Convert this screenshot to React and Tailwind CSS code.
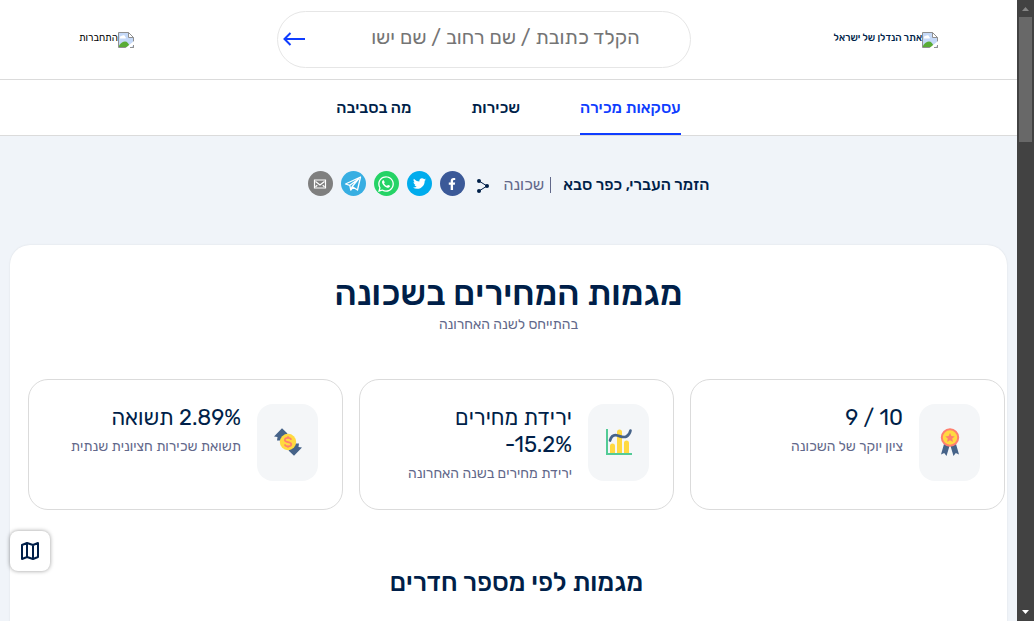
import React from "react";
import { FaFacebookF, FaTwitter, FaWhatsapp } from "react-icons/fa";

function MissingImage() {
  return (
    <svg width="16" height="16" viewBox="0 0 16 16" className="mt-[2px] shrink-0" aria-hidden="true">
      <path d="M.5.5h10l5 5v10H.5z" fill="#c5d9f8" stroke="#909090" />
      <path d="M2 5.500a1.600 1.600 0 0 1 1.800-1.600 2 2 0 0 1 3.500 1 .9.9 0 0 1 .2 1.600H2z" fill="#fff" />
      <path d="M1 15v-1.500c2-2.500 4-4 6-4s4 2 5 5.500z" fill="#5aac36" />
      <path d="M10.500.5v5h5z" fill="#fff" stroke="#909090" />
      <path d="M7.500 16l8.500-7v3.500L12.500 16z" fill="#fff" />
      <path d="M12 15.500h3.500V13" fill="none" stroke="#909090" />
    </svg>
  );
}

function Medal() {
  return (
    <svg width="28" height="28" viewBox="0 0 28 28" aria-hidden="true">
      <path d="M8 16 5 26.500l3.200-1.500L10.500 28 13.500 18zM20 16 23 26.500l-3.200-1.500L17.500 28 14.500 18z" fill="#466389" />
      <circle cx="14" cy="9.500" r="8.200" fill="#ffd940" stroke="#ff7f6e" strokeWidth="2" />
      <path d="m14 5 1.400 3 3.300.4-2.500 2.200.7 3.300-2.900-1.700-2.900 1.700.7-3.300-2.500-2.200 3.300-.4z" fill="#ff7f6e" />
    </svg>
  );
}

function Chart() {
  return (
    <svg width="28" height="28" viewBox="0 0 28 28" aria-hidden="true">
      <path d="M5 26v-8a2.500 2.500 0 0 1 5 0v8zM12 26V4a2.500 2.500 0 0 1 5 0v22zM19 26V15a2.500 2.500 0 0 1 5 0v11z" fill="#ffd940" />
      <path d="M2 1v25h25" fill="none" stroke="#52cb96" strokeWidth="2" />
      <path d="M5 12.500C6.500 7.500 9 6.500 12.500 7.500s6.500 2.500 9 1S25 5 25.500 2.500" fill="none" stroke="#466389" strokeWidth="2.700" strokeLinecap="round" />
    </svg>
  );
}

function Yield() {
  return (
    <svg width="28" height="28" viewBox="0 0 28 28" aria-hidden="true">
      <path d="M0 8.500 8 .2l5.500 5.300-7 7H3L3.500 9zM28 19.500l-8 8.300-5.500-5.300 7-7H25l-.5 3.500z" fill="#466389" />
      <circle cx="14" cy="14" r="8.200" fill="#ffd940" />
      <path d="M17.200 11.800c-.3-1.300-1.600-2-3.200-2-1.800 0-3.200.7-3.200 2.100 0 3 6.500 1.300 6.500 4.300 0 1.400-1.500 2.100-3.300 2.100-1.600 0-3-.7-3.200-2M14 8.300v1.500M14 18.300v1.500" fill="none" stroke="#ff7f6e" strokeWidth="1.700" />
    </svg>
  );
}

function ShareNodes() {
  return (
    <svg width="14" height="16" viewBox="0 0 14 16" aria-hidden="true">
      <path d="m3 3 8 5-8 5" fill="none" stroke="#001f49" />
      <circle cx="3" cy="3" r="2" fill="#001f49" />
      <circle cx="11" cy="8" r="2" fill="#001f49" />
      <circle cx="3" cy="13" r="2" fill="#001f49" />
    </svg>
  );
}

function PaperPlane() {
  return (
    <svg width="18" height="18" viewBox="0 0 18 18" fill="none" stroke="#fff" strokeWidth="1.300" strokeLinejoin="round" aria-hidden="true">
      <path d="M1.500 9 16.500 2l-3 13-4.300-2.800-2.400 2.800-1-4.700zM5.800 10.300 14.500 4 8.200 11.500l-1.400 3.300" />
    </svg>
  );
}

function Envelope() {
  return (
    <svg width="14" height="12" viewBox="0 0 14 12" fill="none" stroke="#fff" strokeWidth="1.200" aria-hidden="true">
      <path d="M1.500 2h11v8h-11zM2.500 3.500 7 7l4.500-3.500M2.500 8.800l1.800-1.600M11.500 8.800 9.700 7.200" />
    </svg>
  );
}

const shareLinks = [
  { label: "Facebook", color: "bg-[#3b5998]", icon: <FaFacebookF size={12} /> },
  { label: "Twitter", color: "bg-[#00aced]", icon: <FaTwitter size={13} /> },
  { label: "WhatsApp", color: "bg-[#25d366]", icon: <FaWhatsapp size={18} /> },
  { label: "Telegram", color: "bg-[#37aee2]", icon: <PaperPlane /> },
  { label: "Email", color: "bg-[#7f7f7f]", icon: <Envelope /> },
];

const tabs = ["עסקאות מכירה", "שכירות", "מה בסביבה"];

const stats = [
  { icon: <Medal />, title: <span dir="ltr">9 / 10</span>, text: "ציון יוקר של השכונה" },
  {
    icon: <Chart />,
    title: (
      <>
        ירידת מחירים <br />
        <span dir="ltr">-15.2%</span>
      </>
    ),
    text: "ירידת מחירים בשנה האחרונה",
  },
  {
    icon: <Yield />,
    title: (
      <>
        <span dir="ltr">2.89%</span> תשואה
      </>
    ),
    text: "תשואת שכירות חציונית שנתית",
  },
];

export default function App() {
  return (
    <div className="flex h-screen overflow-hidden bg-[#f0f4f9] font-['Rubik','Open_Sans',sans-serif] text-[#001f49]">
      <div dir="rtl" className="relative min-w-0 flex-1 overflow-hidden">
        <header className="flex h-20 items-center justify-between border-b border-[#dbdbdb] bg-white px-[79px]">
          <a href="#home" className="flex items-start pb-[2px] text-[10px] leading-4 font-medium">
            <MissingImage />
            אתר הנדלן של ישראל
          </a>
          <form className="flex h-[57px] w-[414px] items-center rounded-full border border-[#e6e6e6] pr-[50px] pb-[2px] pl-[5px]">
            <input
              type="text"
              aria-label="חיפוש"
              placeholder="הקלד כתובת / שם רחוב / שם ישו"
              className="min-w-0 flex-1 pb-1 text-xl outline-none placeholder:text-[#757575]"
            />
            <button type="button" aria-label="חפש">
              <svg width="22" height="16" viewBox="0 0 22 16" fill="none" stroke="#0f3dff" strokeWidth="2" aria-hidden="true">
                <path d="M22 8H1.500M7.500 2 1.500 8l6 6" />
              </svg>
            </button>
          </form>
          <a href="#login" className="flex items-start pb-[2px] text-[10px] leading-4 text-black">
            <MissingImage />
            התחברות
          </a>
        </header>

        <nav className="flex h-14 justify-center gap-[60px] border-b border-[#dbdbdb] bg-white text-base font-medium">
          {tabs.map((tab, i) => (
            <a
              key={tab}
              href="#tab"
              className={i === 0 ? "flex items-center border-b-2 border-[#0f3dff] pt-[2px] text-[#0f3dff]" : "flex items-center border-b-2 border-transparent pt-[2px]"}
            >
              {tab}
            </a>
          ))}
        </nav>

        <div className="flex h-[109px] items-start justify-center pt-[35px]">
          <div className="flex items-center">
            <strong className="text-base font-medium">הזמר העברי, כפר סבא</strong>
            <span className="mr-3 h-4 w-px bg-[#62688a]" />
            <span className="mr-[6px] text-base text-[#62688a]">שכונה</span>
            <span className="mr-[14px] pt-[2px]">
              <ShareNodes />
            </span>
            <div className="mr-[11px] flex gap-2 pb-[2px]">
              {shareLinks.map((s) => (
                <button
                  key={s.label}
                  type="button"
                  aria-label={s.label}
                  className={`flex size-[25px] items-center justify-center rounded-full text-white ${s.color}`}
                >
                  {s.icon}
                </button>
              ))}
            </div>
          </div>
        </div>

        <main className="mx-[10px] min-h-screen rounded-[20px] bg-white pt-7 shadow-[0_0_2px_rgba(0,0,0,0.1)]">
          <h1 className="text-center text-[35px] leading-10 font-medium">מגמות המחירים בשכונה</h1>
          <p className="text-center text-sm leading-6 text-[#62688a]">בהתייחס לשנה האחרונה</p>

          <section className="mt-[42px] mr-[2px] ml-[18px]">
            <div className="grid grid-cols-3 gap-4">
              {stats.map((s) => (
                <article key={s.text} className="flex min-h-[131px] items-start gap-4 rounded-[20px] border border-[#dbdbdb] px-6 pt-6 pb-5">
                  <div className="flex h-[77px] w-[61px] shrink-0 items-center justify-center rounded-2xl bg-[#f4f6f8] pb-[2px]">{s.icon}</div>
                  <div>
                    <h3 className="text-[22px] leading-[27px]">{s.title}</h3>
                    <p className="mt-1 text-sm leading-6 whitespace-nowrap text-[#62688a]">{s.text}</p>
                  </div>
                </article>
              ))}
            </div>
            <h2 className="mt-[57px] text-center text-[26px] leading-8 font-medium">מגמות לפי מספר חדרים</h2>
          </section>
        </main>

        <button
          type="button"
          aria-label="מפה"
          className="absolute bottom-[50px] left-[10px] flex size-10 items-center justify-center rounded-lg bg-white shadow-[0_0_4px_rgba(0,0,0,0.4)]"
        >
          <svg width="20" height="20" viewBox="0 0 20 20" fill="none" stroke="#001f49" strokeWidth="2" strokeLinejoin="round" aria-hidden="true">
            <path d="M2 4l5-2 6 2 5-2v14l-5 2-6-2-5 2zM7 2v14M13 4v14" />
          </svg>
        </button>
      </div>

      <div className="flex w-[17px] shrink-0 flex-col items-center justify-between bg-[#424242]" aria-hidden="true">
        <div className="flex flex-col items-center">
          <svg width="17" height="17" viewBox="0 0 17 17">
            <path d="M5 11h7L8.500 7z" fill="#868686" />
          </svg>
          <div className="h-[125px] w-[13px] bg-[#686868]" />
        </div>
        <svg width="17" height="17" viewBox="0 0 17 17">
          <path d="M5 6h7l-3.500 4z" fill="#fff" />
        </svg>
      </div>
    </div>
  );
}
